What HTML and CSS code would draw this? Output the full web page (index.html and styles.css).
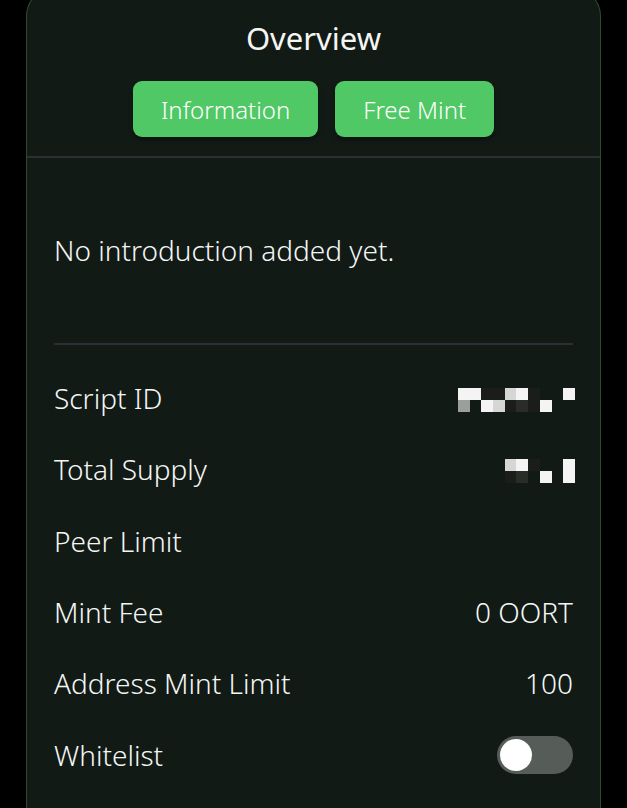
FILE: index.html
```html
<!DOCTYPE html>
<html lang="en">
<head>
  <meta charset="UTF-8">
  <meta name="viewport" content="width=device-width, initial-scale=1.0">
  <title>Overview</title>
  <link rel="stylesheet" href="styles.css">
</head>
<body>
  <div class="card">
    <div class="card-head">
      <h1>Overview</h1>
      <div class="tabs">
        <a class="tab" href="#">Information</a>
        <a class="tab" href="#">Free Mint</a>
      </div>
    </div>

    <div class="card-body">
      <p class="intro">No introduction added yet.</p>
      <div class="divider"></div>

      <div class="rows">
        <div class="row">
          <span class="label">Script ID</span>
          <div class="mosaic">
            <i class="w"></i><i class="w"></i><i class="d"></i><i class="d"></i><i class="l"></i><i class="w"></i><i class="d"></i><i></i><i></i><i class="w"></i>
            <i class="g"></i><i></i><i class="w"></i><i class="l"></i><i class="d"></i><i class="m"></i><i class="d"></i><i class="w"></i><i></i><i></i>
          </div>
        </div>
        <div class="row">
          <span class="label">Total Supply</span>
          <div class="mosaic">
            <i></i><i></i><i></i><i></i><i class="l"></i><i class="w"></i><i class="d"></i><i></i><i></i><i class="w"></i>
            <i></i><i></i><i></i><i></i><i class="d"></i><i class="m"></i><i></i><i class="w"></i><i></i><i class="w"></i>
          </div>
        </div>
        <div class="row">
          <span class="label">Peer Limit</span>
          <span class="value"></span>
        </div>
        <div class="row">
          <span class="label">Mint Fee</span>
          <span class="value">0 OORT</span>
        </div>
        <div class="row">
          <span class="label">Address Mint Limit</span>
          <span class="value">100</span>
        </div>
        <div class="row">
          <span class="label">Whitelist</span>
          <span class="switch"><span class="knob"></span></span>
        </div>
      </div>
    </div>
  </div>
</body>
</html>
```

FILE: styles.css
```css
body {
  margin: 0;
  background-color: #000;
  font-family: 'Noto Sans', 'Open Sans', Arial, sans-serif;
  font-weight: 350;
  color: #f4f6f4;
  height: 808px;
  overflow: hidden;
}

.card {
  margin: -12px 26px 0 26px;
  min-height: 840px;
  background-color: #121a16;
  border: 1px solid #2a4d32;
  border-bottom: none;
  border-radius: 28px 28px 0 0;
}

.card-head {
  padding: 29px 0 19px;
  text-align: center;
  border-bottom: 2px solid #2a3034;
}

.card-head h1 {
  margin: 0;
  font-size: 31px;
  line-height: 40px;
  font-weight: 400;
}

.tabs {
  display: flex;
  justify-content: center;
  gap: 17px;
  margin-top: 23px;
}

.tab {
  display: flex;
  align-items: center;
  justify-content: center;
  height: 56px;
  padding: 0 28px;
  border-radius: 9px;
  background-color: #4fc865;
  color: #fff;
  text-decoration: none;
  font-size: 24px;
  font-weight: 300;
  box-shadow: 0 3px 4px rgba(0,0,0,0.35);
}

.card-body {
  padding: 0 27px;
}

.intro {
  margin: 74px 0 0;
  font-size: 28px;
  line-height: 36px;
}

.divider {
  margin-top: 75px;
  height: 2px;
  background-color: #2a3034;
}

.rows {
  padding-top: 17.5px;
}

.row {
  display: flex;
  justify-content: space-between;
  align-items: center;
  height: 71.3px;
  font-size: 28px;
}

/* blurred values */
.mosaic {
  display: grid;
  grid-template-columns: repeat(10, 1fr);
  grid-auto-rows: 12px;
  width: 117px;
  margin: 4px -2px 0 0;
}

.mosaic .w { background-color: #f4f4f4; }
.mosaic .l { background-color: #d6d6d6; }
.mosaic .g { background-color: #9c9e9c; }
.mosaic .m { background-color: #2a2c2a; }
.mosaic .d { background-color: #1b1d1b; }

.switch {
  position: relative;
  width: 76px;
  height: 38px;
  border-radius: 19px;
  background-color: #565d59;
}

.knob {
  position: absolute;
  top: 3px;
  left: 3px;
  width: 32px;
  height: 32px;
  border-radius: 50%;
  background-color: #fff;
}
```
